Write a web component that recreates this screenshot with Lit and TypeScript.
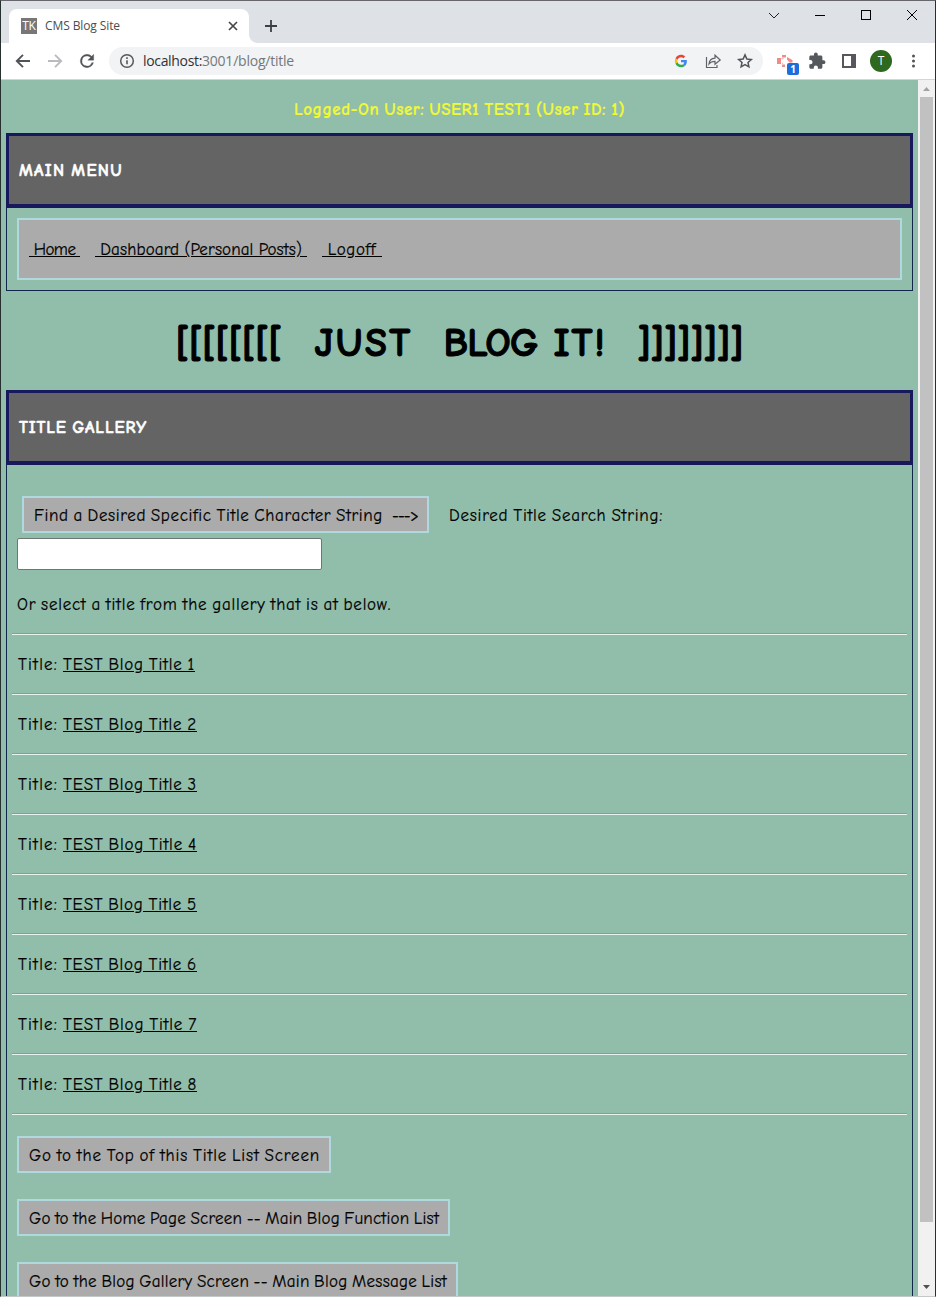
import { LitElement, html, css } from "lit";
import { customElement, property } from "lit/decorators.js";

/** A run of text tracked so that it spans a given width. */
@customElement("fit-text")
class FitText extends LitElement {
  @property({ type: Number }) width = 0;
  @property() text = "";

  static styles = css`
    :host { display: inline-block; white-space: pre; text-decoration: inherit; }
    .run { display: inline-block; white-space: pre; text-decoration: inherit; }
  `;

  render() {
    return html`<span class="run">${this.text}</span>`;
  }

  firstUpdated() {
    const run = this.renderRoot.querySelector(".run") as HTMLElement;
    const natural = run.getBoundingClientRect().width;
    this.style.width = `${this.width}px`;
    run.style.letterSpacing = `${(this.width - natural) / this.text.length}px`;
  }
}

const fit = (text: string, width: number, cls = "") =>
  html`<fit-text class=${cls} .text=${text} .width=${width}></fit-text>`;

@customElement("browser-chrome")
class BrowserChrome extends LitElement {
  static styles = css`
    :host { display: block; font-family: "Open Sans", sans-serif; }
    svg { display: block; flex: none; }
    .titlebar { height: 42px; background: #dee1e6; display: flex; align-items: flex-end; }
    .tab { margin-left: 8px; width: 240px; height: 34px; box-sizing: border-box; background: #fff;
      border-radius: 8px 8px 0 0; display: flex; align-items: center; padding: 0 9px 0 12px; }
    .fav { width: 16px; height: 16px; background: #777; color: #fff; font: 12px/16px "Open Sans", sans-serif;
      text-align: center; letter-spacing: -0.3px; margin-right: 8px; }
    .tabname { font-size: 12px; line-height: 16px; color: #4a4d51; flex: 1; }
    .curve { width: 8px; height: 8px; background: radial-gradient(circle at 100% 0, transparent 7.5px, #fff 8px); }
    .plus { margin: 0 0 10px 7px; }
    .spacer { flex: 1; }
    .controls { align-self: flex-start; margin: 6px 15px 0 0; display: flex; gap: 30px; }
    .toolbar { height: 36px; background: #fff; display: flex; align-items: center; }
    .nav { display: flex; gap: 12px; margin-left: 12px; }
    .omni { margin-left: 12px; width: 654px; height: 28px; border-radius: 14px; background: #f1f3f4;
      box-sizing: border-box; display: flex; align-items: center; padding: 0 8px 0 8px; }
    .url { margin-left: 6px; font-size: 14px; line-height: 20px; color: #303134; }
    .path { color: #74787c; }
    .tools { display: flex; gap: 12px; }
    .ext { display: flex; align-items: center; margin-left: 12px; gap: 11px; }
    .ext .puzzle { margin-left: 1px; }
    .ext .panelicon { margin-left: 1px; }
    .avatar { width: 22px; height: 22px; border-radius: 50%; background: #2f681f; color: #fff;
      font-size: 12px; line-height: 22px; text-align: center; }
    .line { height: 1px; background: #d3d6d8; }
    .logo { position: relative; }
    .badge { position: absolute; left: 12px; top: 12px; width: 12px; height: 12px; border-radius: 2px;
      background: #1a6fdc; color: #fff; font-size: 10px; font-weight: 700; line-height: 12px; text-align: center; }
  `;

  render() {
    return html`
      <div class="titlebar">
        <div class="tab">
          <div class="fav">TK</div>
          <div class="tabname">${fit("CMS Blog Site", 75)}</div>
          <svg width="14" height="14" viewBox="0 0 14 14"><path d="M3 3l8 8M11 3l-8 8" stroke="#44474b" stroke-width="1.7"/></svg>
        </div>
        <div class="curve"></div>
        <svg class="plus" width="14" height="14" viewBox="0 0 14 14"><path d="M7 1v12M1 7h12" stroke="#3c4043" stroke-width="1.8"/></svg>
        <div class="spacer"></div>
        <div class="controls">
          <svg width="16" height="16" viewBox="0 0 16 16"><path d="M3 6l5 5 5-5" fill="none" stroke="#222"/></svg>
          <svg width="16" height="16" viewBox="0 0 16 16"><path d="M3 8.500h10" stroke="#000"/></svg>
          <svg width="16" height="16" viewBox="0 0 16 16"><rect x="3.500" y="3.500" width="9" height="9" fill="none" stroke="#000"/></svg>
          <svg width="16" height="16" viewBox="0 0 16 16"><path d="M3 3l10 10M13 3l-10 10" stroke="#000"/></svg>
        </div>
      </div>
      <div class="toolbar">
        <div class="nav">
          <svg width="20" height="20" viewBox="0 0 20 20"><path d="M17 10H4.500M10 3.800L3.800 10l6.200 6.200" fill="none" stroke="#505458" stroke-width="1.900"/></svg>
          <svg width="20" height="20" viewBox="0 0 20 20"><path d="M3 10h12.500M10 3.800l6.200 6.200L10 16.200" fill="none" stroke="#b9bbbe" stroke-width="1.900"/></svg>
          <svg width="20" height="20" viewBox="0 0 24 24"><path fill="#505458" stroke="#505458" stroke-width=".4" d="M17.650 6.350A7.960 7.960 0 0012 4a8 8 0 107.730 10h-2.080A6 6 0 1112 6c1.660 0 3.140.69 4.220 1.780L13 11h7V4z"/></svg>
        </div>
        <div class="omni">
          <svg width="20" height="20" viewBox="0 0 20 20"><circle cx="10" cy="10" r="6.300" fill="none" stroke="#55595d" stroke-width="1.500"/><path d="M10 9.200v4M10 6.300v1.700" stroke="#55595d" stroke-width="1.600"/></svg>
          <div class="url">${fit("localhost:", 59)}${fit("3001/blog/title", 92, "path")}</div>
          <div class="spacer"></div>
          <div class="tools">
            <svg width="20" height="20" viewBox="-15 -15 78 78">
              <path fill="#EA4335" d="M24 9.500c3.540 0 6.710 1.220 9.210 3.600l6.850-6.850C35.900 2.380 30.470 0 24 0 14.620 0 6.510 5.380 2.560 13.220l7.980 6.190C12.430 13.720 17.740 9.500 24 9.500z"/>
              <path fill="#4285F4" d="M46.980 24.550c0-1.570-.15-3.090-.38-4.550H24v9.020h12.940c-.58 2.960-2.260 5.480-4.780 7.180l7.730 6c4.510-4.180 7.090-10.360 7.090-17.650z"/>
              <path fill="#FBBC05" d="M10.530 28.590c-.48-1.450-.76-2.990-.76-4.590s.27-3.140.76-4.590l-7.980-6.190C.92 16.460 0 20.120 0 24s.92 7.540 2.560 10.780z"/>
              <path fill="#34A853" d="M24 48c6.480 0 11.930-2.130 15.890-5.810l-7.730-6c-2.150 1.450-4.920 2.300-8.160 2.300-6.260 0-11.570-4.220-13.470-9.910l-7.980 6.190C6.510 42.620 14.620 48 24 48z"/>
            </svg>
            <svg width="20" height="20" viewBox="0 0 20 20" fill="none" stroke="#5f6368" stroke-width="1.200"><path d="M3.500 6v10.500H14V14"/><path d="M6 13c.3-3.800 2.600-5.700 6-5.900V4.200L17.200 9 12 13.300v-2.900c-2.700 0-4.600.7-6 2.600z"/></svg>
            <svg width="20" height="20" viewBox="0 0 20 20"><path d="M10 3.900l1.850 4.050 4.450.5-3.300 3 .9 4.350L10 13.650 6.100 15.800l.9-4.350-3.300-3 4.450-.5z" fill="none" stroke="#505458" stroke-width="1.500"/></svg>
          </div>
        </div>
        <div class="ext">
          <div class="logo">
            <svg width="20" height="20" viewBox="0 0 20 20"><path fill="#ef8c89" d="M2 7h4v6H2zM7 4h4v2.500H7zM7 13.500h3V16H7zM12 6l5.500 3v2.500h-3L12 8.500z"/><path fill="#f7c3c1" d="M6 7l3-.5v1L7 9zM7 11l2 2.500H7z"/></svg>
            <div class="badge">1</div>
          </div>
          <svg class="puzzle" width="20" height="20" viewBox="0 0 26 26"><path fill="#55595d" d="M21.500 12H20V8c0-1.100-.9-2-2-2h-4V4.500a2.500 2.500 0 00-5 0V6H5c-1.100 0-2 .9-2 2v3.800h1.500a2.700 2.700 0 010 5.400H3V21c0 1.100.9 2 2 2h3.800v-1.500a2.700 2.700 0 015.400 0V23H18c1.100 0 2-.9 2-2v-4h1.500a2.500 2.500 0 000-5z"/></svg>
          <svg class="panelicon" width="20" height="20" viewBox="0 0 20 20"><path fill="#55595d" fill-rule="evenodd" d="M3 3h14v14H3zM5 5v10h7V5z"/></svg>
          <div class="avatar">T</div>
          <svg width="20" height="20" viewBox="0 0 20 20" fill="#505458"><circle cx="10.500" cy="5" r="1.500"/><circle cx="10.500" cy="10" r="1.500"/><circle cx="10.500" cy="15" r="1.500"/></svg>
        </div>
      </div>
      <div class="line"></div>
    `;
  }
}

@customElement("app-root")
class AppRoot extends LitElement {
  static styles = css`
    :host { display: block; }
    .window { width: 936px; height: 1297px; box-sizing: border-box; overflow: hidden; background: #fff;
      border: 1px solid #25302f; border-top-color: #66666c; border-bottom-color: #c5cac8;
      display: flex; flex-direction: column; }
    .view { flex: 1; min-height: 0; display: flex; }
    .page { width: 917px; box-sizing: border-box; padding: 0 5px; overflow: hidden; background: #91bdab;
      color: #000; font: 17px/24px "Comic Sans MS", "Comic Neue", "Open Sans", cursive;
      word-spacing: -1.5px; -webkit-text-stroke: 0.2px currentColor; }
    .user { height: 53px; padding-top: 18px; box-sizing: border-box; text-align: center;
      color: #f0f934; font-weight: 700; }
    .panel { border: 1px solid #12264b; border-top: 0; }
    .head { height: 75px; box-sizing: border-box; margin: 0 -1px; border: 3px solid #18185c; border-bottom-width: 4px;
      background: #646464; color: #fff; font-weight: 700; padding: 23px 10px 0;
      -webkit-text-stroke: 0.5px currentColor; }
    .menu { margin: 10px; height: 62px; box-sizing: border-box; border: 2px solid #b0d9de; background: #ababab;
      padding: 18px 10px 0; display: flex; gap: 15px; word-spacing: -0.5px; }
    .link { text-decoration: underline; }
    .banner { height: 99px; box-sizing: border-box; padding-top: 26px; display: flex; justify-content: center;
      font-size: 40px; line-height: 52px; font-weight: 700; -webkit-text-stroke: 1px currentColor; }
    .g1 { margin-left: 33px; }
    .g2 { margin-left: 31px; }
    .g3 { margin-left: 16px; }
    .body { padding: 31px 5px 0; height: 900px; }
    .search { display: flex; align-items: center; margin-left: 10px; gap: 20px; }
    .label { padding-top: 2px; }
    .btn { width: max-content; height: 37px; box-sizing: border-box; border: 2px solid #b0d9de; background: #ababab;
      padding: 6px 9px 0 10px; }
    .arrow { margin-left: 9px; }
    .field { display: block; margin: 5px 0 0 5px; width: 305px; height: 32px; box-sizing: border-box;
      border: 1px solid #6e7774; border-radius: 2px; background: #fff; padding: 0 6px; font: inherit; }
    .hint { margin: 23px 0 0 5px; height: 40px; }
    .row { border-top: 1px solid #8d9b95; height: 60px; box-sizing: border-box; }
    .cell { border-top: 1px solid #e7f3ee; padding: 18px 0 0 6px; }
    .cell .link { margin-left: 5px; }
    .end { height: 23px; }
    .actions { margin-left: 5px; display: flex; flex-direction: column; gap: 26px; }
    .scroll { width: 17px; background: #f1f1f1; display: flex; flex-direction: column; align-items: center; }
    .thumb { width: 13px; height: 1125px; background: #c1c1c1; }
    .scroll svg { display: block; }
    .gap { flex: 1; }
  `;

  render() {
    const rows = [1, 2, 3, 4, 5, 6, 7, 8];
    return html`
      <div class="window">
        <browser-chrome></browser-chrome>
        <div class="view">
          <div class="page">
            <div class="user">${fit("Logged-On User: USER1 TEST1 (User ID: 1)", 331)}</div>
            <div class="panel">
              <div class="head">${fit("MAIN MENU", 104)}</div>
              <div class="menu">
                ${fit("\u00a0Home\u00a0", 51, "link")}
                ${fit("\u00a0Dashboard (Personal Posts)\u00a0", 212, "link")}
                ${fit("\u00a0Logoff\u00a0", 60, "link")}
              </div>
            </div>
            <div class="banner">
              ${fit("[[[[[[[[", 106)}${fit("JUST", 98, "g1")}${fit("BLOG", 94, "g2")}${fit("IT!", 53, "g3")}${fit("]]]]]]]]", 106, "g2")}
            </div>
            <div class="panel">
              <div class="head">${fit("TITLE GALLERY", 128)}</div>
              <div class="body">
                <div class="search">
                  <div class="btn">${fit("Find a Desired Specific Title Character String", 349)}${fit("--->", 26, "arrow")}</div>
                  ${fit("Desired Title Search String:", 214, "label")}
                </div>
                <input class="field" aria-label="Desired Title Search String" />
                <div class="hint">${fit("Or select a title from the gallery that is at below.", 374)}</div>
                ${rows.map((n) => html`
                  <div class="row"><div class="cell">${fit("Title:", 40)}${fit(`TEST Blog Title ${n}`, n === 1 ? 132 : 134, "link")}</div></div>
                `)}
                <div class="row end"><div class="cell"></div></div>
                <div class="actions">
                  <div class="btn">${fit("Go to the Top of this Title List Screen", 291)}</div>
                  <div class="btn">${fit("Go to the Home Page Screen -- Main Blog Function List", 410)}</div>
                  <div class="btn">${fit("Go to the Blog Gallery Screen -- Main Blog Message List", 418)}</div>
                </div>
              </div>
            </div>
          </div>
          <div class="scroll">
            <svg width="17" height="17" viewBox="0 0 17 17"><path d="M5 11h7L8.500 7z" fill="#a3a3a3"/></svg>
            <div class="thumb"></div>
            <div class="gap"></div>
            <svg width="17" height="17" viewBox="0 0 17 17"><path d="M5 6h7l-3.500 4z" fill="#505050"/></svg>
          </div>
        </div>
      </div>
    `;
  }
}
